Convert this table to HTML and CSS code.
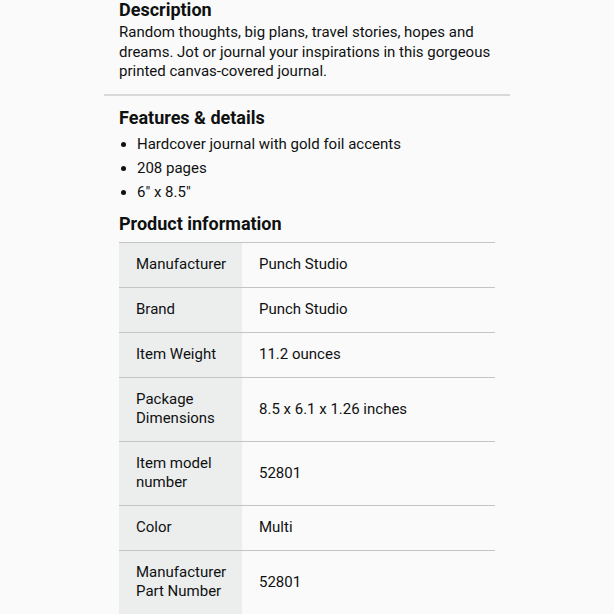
FILE: index.html
```html
<!DOCTYPE html>
<html lang="en">
<head>
<meta charset="utf-8">
<title>Product details</title>
<link rel="stylesheet" href="styles.css">
</head>
<body>
<main class="page">
  <section class="section desc">
    <h2 class="heading">Description</h2>
    <p class="text">Random thoughts, big plans, travel stories, hopes and dreams. Jot or journal your inspirations in this gorgeous printed canvas-covered journal.</p>
  </section>
  <hr class="divider">
  <section class="section features">
    <h2 class="heading">Features &amp; details</h2>
    <ul class="bullets">
      <li>Hardcover journal with gold foil accents</li>
      <li>208 pages</li>
      <li>6" x 8.5"</li>
    </ul>
  </section>
  <section class="section info">
    <h2 class="heading">Product information</h2>
    <table class="info-table">
      <colgroup><col class="col-label"><col></colgroup>
      <tr><th>Manufacturer</th><td>Punch Studio</td></tr>
      <tr><th>Brand</th><td>Punch Studio</td></tr>
      <tr><th>Item Weight</th><td>11.2 ounces</td></tr>
      <tr><th>Package Dimensions</th><td>8.5 x 6.1 x 1.26 inches</td></tr>
      <tr><th>Item model number</th><td>52801</td></tr>
      <tr><th>Color</th><td>Multi</td></tr>
      <tr><th>Manufacturer Part Number</th><td>52801</td></tr>
    </table>
  </section>
</main>
</body>
</html>
```
FILE: styles.css
```css
html, body {
  margin: 0;
  padding: 0;
  background: #fafafa;
}
body {
  font-family: Roboto, "Noto Sans", sans-serif;
  color: #0f1111;
  width: 614px;
  height: 614px;
  overflow: hidden;
}
.page {
  padding: 0 0 0 104px;
  width: 406px;
}
.section {
  padding: 0 15px;
}
.heading {
  margin: 0;
  font-size: 18px;
  font-weight: 700;
  line-height: 20px;
}
.text {
  margin: 3px 0 0;
  font-size: 15px;
  line-height: 19.5px;
}
.divider {
  margin: 12px 0 0;
  border: 0;
  height: 2px;
  background: #d8d8d8;
}
.features {
  padding-top: 12px;
}
.bullets {
  margin: 4.5px 0 0;
  padding: 0 0 0 18px;
  font-size: 15px;
  line-height: 24px;
}
.info {
  padding-top: 10px;
}
.info-table {
  margin-top: 7.5px;
  width: 376px;
  table-layout: fixed;
  border-collapse: collapse;
  font-size: 15px;
  line-height: 19px;
}
.col-label {
  width: 123px;
}
.info-table tr {
  border-top: 1px solid #c4c4c4;
}
.info-table th {
  background: #eceeee;
  text-align: left;
  font-weight: 400;
  padding: 12.5px 10px 12.5px 17px;
}
.info-table td {
  padding: 12.5px 17px;
}
```
